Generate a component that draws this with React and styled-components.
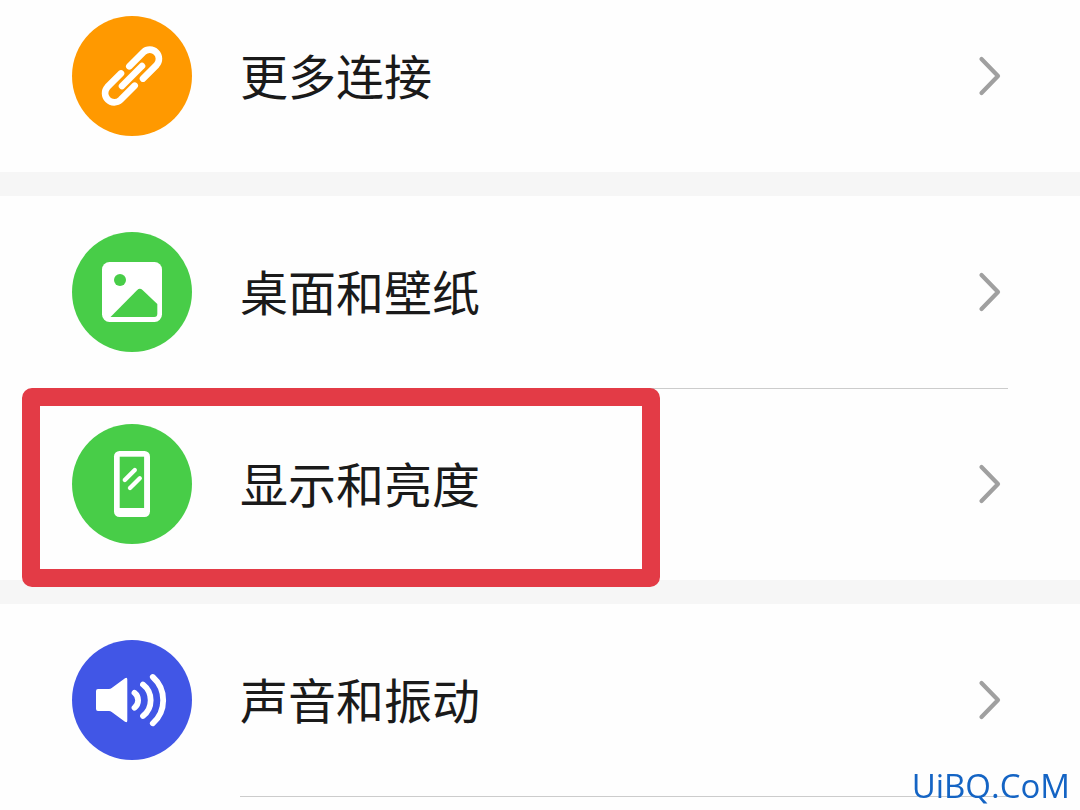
import styled, { createGlobalStyle } from 'styled-components';

const GlobalStyle = createGlobalStyle`
	* {
		box-sizing: border-box;
	}

	body {
		margin: 0;
		background: #fefefe;
		font-family: 'Noto Sans CJK SC', sans-serif;
	}
`;

const Page = styled.main`
	display: flex;
	flex-direction: column;
	gap: 24px;
	min-height: 100vh;
	background: #f6f6f6;
`;

const Section = styled.section`
	background: #fefefe;

	&:last-child {
		flex: 1;
	}
`;

const Row = styled.a`
	position: relative;
	display: flex;
	align-items: center;
	gap: 48px;
	padding: ${({ $first }) => ($first ? '16px 72px 36px' : '36px 72px')};
	color: #1a1a1a;
	text-decoration: none;
`;

const Label = styled.span`
	flex: 1;
	padding-bottom: 4px;
	font-size: 48px;
	line-height: 72px;
`;

const Badge = styled.svg`
	width: 120px;
	height: 120px;
	flex-shrink: 0;
	border-radius: 50%;
	background: ${({ $color }) => $color};
`;

const Arrow = styled.svg`
	width: 32px;
	height: 40px;
	flex-shrink: 0;
`;

const Divider = styled.div`
	height: 1px;
	margin: 0 72px -1px 240px;
	background: #cccccc;
`;

const Highlight = styled.div`
	position: absolute;
	top: 0;
	left: 22px;
	width: 638px;
	height: 199px;
	border: 18px solid #e33b46;
	border-radius: 10px;
	pointer-events: none;
	z-index: 1;
`;

const Watermark = styled.div`
	position: fixed;
	right: 10px;
	bottom: 4px;
	color: #1464c4;
	font-family: 'Open Sans', sans-serif;
	font-size: 33px;
	line-height: 40px;
`;

const LinkIcon = () => (
	<Badge $color="#ff9900" viewBox="0 0 120 120" aria-hidden="true">
		<g fill="none" stroke="#fff" strokeWidth="6.6" strokeLinecap="round">
			<path d="M57.3 50.3 71.5 36.1A9.2 9.2 0 0 1 84.5 49.1L71 62.6" />
			<path d="M62.7 69.7 48.5 83.9A9.2 9.2 0 0 1 35.5 70.9L49 57.4" />
			<path d="M70 50 50 70" />
		</g>
	</Badge>
);

const PictureIcon = () => (
	<Badge $color="#48cd48" viewBox="0 0 120 120" aria-hidden="true">
		<rect x="30" y="30" width="60" height="60" rx="7.5" fill="#fff" />
		<circle cx="48" cy="48" r="6" fill="#48cd48" />
		<path
			d="M38.5 85 65 58.2Q67.7 55.5 70.5 58L85.3 72V82Q85.3 85 82.3 85Z"
			fill="#48cd48"
		/>
	</Badge>
);

const PhoneIcon = () => (
	<Badge $color="#48cd48" viewBox="0 0 120 120" aria-hidden="true">
		<rect x="42" y="27" width="36" height="66" rx="5.5" fill="#fff" />
		<rect x="47.7" y="32.7" width="24.4" height="51.3" fill="#48cd48" />
		<g stroke="#fff" strokeWidth="4.3" strokeLinecap="round">
			<path d="M52.8 56 62.8 46" />
			<path d="M58 64 67.8 54.2" />
		</g>
	</Badge>
);

const SoundIcon = () => (
	<Badge $color="#4156e6" viewBox="0 0 120 120" aria-hidden="true">
		<path
			d="M26 49H37Q38.5 49 39.7 48L53 38.2Q55.3 36.8 55.3 39.5V80.5Q55.3 83.2 53 81.8L39.7 72Q38.5 71 37 71H26Q24 71 24 69V51Q24 49 26 49Z"
			fill="#fff"
		/>
		<g fill="none" stroke="#fff" strokeWidth="5.8" strokeLinecap="round">
			<path d="M62.5 52.7A9.6 9.6 0 0 1 62.5 67.7" />
			<path d="M71 44.5A20 20 0 0 1 71 76" />
			<path d="M80.8 37A31 31 0 0 1 80.8 83.3" />
		</g>
	</Badge>
);

const sections = [
	[{ label: '更多连接', icon: LinkIcon }],
	[
		{ label: '桌面和壁纸', icon: PictureIcon },
		{ label: '显示和亮度', icon: PhoneIcon, highlighted: true },
	],
	[{ label: '声音和振动', icon: SoundIcon }],
];

const SettingRow = ({ label, icon: Icon, highlighted, first }) => (
	<Row href="#" $first={first}>
		<Icon />
		<Label>{label}</Label>
		<Arrow viewBox="0 0 32 40" aria-hidden="true">
			<path
				d="M5.5 3 22 20 5.5 37"
				fill="none"
				stroke="#a0a0a0"
				strokeWidth="4.2"
				strokeLinecap="round"
				strokeLinejoin="round"
			/>
		</Arrow>
		{highlighted && <Highlight />}
	</Row>
);

const App = () => {
	return (
		<>
			<GlobalStyle />
			<Page>
				{sections.map((rows, i) => (
					<Section key={i}>
						{rows.map((row, j) => (
							<div key={row.label}>
								{j > 0 && <Divider />}
								<SettingRow {...row} first={i === 0} />
							</div>
						))}
						{i === sections.length - 1 && <Divider />}
					</Section>
				))}
			</Page>
			<Watermark>UiBQ.CoM</Watermark>
		</>
	);
};

export default App;
